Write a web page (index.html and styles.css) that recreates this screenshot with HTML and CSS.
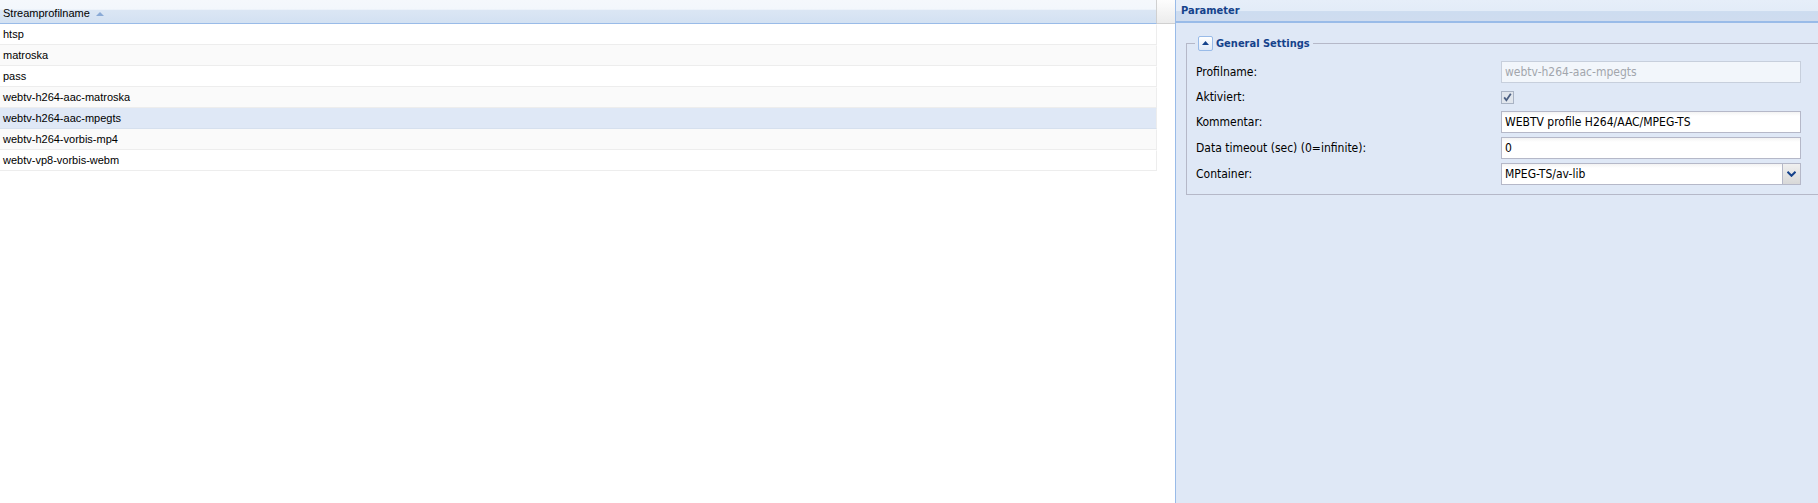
FILE: index.html
```html
<!DOCTYPE html>
<html lang="de">
<head>
  <meta charset="UTF-8">
  <title>Stream-Profile</title>
  <link rel="stylesheet" href="styles.css">
</head>
<body>

  <div class="layout">
    <div class="grid">
      <div class="grid-head">
        <div class="hd-col sorted">Streamprofilname <span class="sort-arrow"></span></div>
        <div class="hd-filler"></div>
      </div>
      <div class="grid-body">
        <div class="row">htsp</div>
        <div class="row alt">matroska</div>
        <div class="row">pass</div>
        <div class="row alt">webtv-h264-aac-matroska</div>
        <div class="row selected">webtv-h264-aac-mpegts</div>
        <div class="row alt">webtv-h264-vorbis-mp4</div>
        <div class="row">webtv-vp8-vorbis-webm</div>
      </div>
    </div>

    <div class="panel">
      <div class="panel-head">Parameter</div>
      <div class="panel-body">
        <fieldset class="fset">
          <legend>
            <span class="collapse-btn">
              <svg width="7" height="4" viewBox="0 0 7 4"><path d="M0 4 L3.5 0 L7 4 Z" fill="#15428b"/></svg>
            </span>
            General Settings
          </legend>

          <div class="frow">
            <label>Profilname:</label>
            <input class="field disabled" type="text" value="webtv-h264-aac-mpegts" disabled>
          </div>
          <div class="frow check-row">
            <label>Aktiviert:</label>
            <span class="checkbox">
              <svg width="9" height="9" viewBox="0 0 9 9"><path d="M1.2 4.4 L3.4 7.2 L7.8 0.8" stroke="#4b5f82" stroke-width="1.8" fill="none"/></svg>
            </span>
          </div>
          <div class="frow">
            <label>Kommentar:</label>
            <input class="field" type="text" value="WEBTV profile H264/AAC/MPEG-TS">
          </div>
          <div class="frow">
            <label>Data timeout (sec) (0=infinite):</label>
            <input class="field" type="text" value="0">
          </div>
          <div class="frow">
            <label>Container:</label>
            <div class="combo">
              <span class="combo-text">MPEG-TS/av-lib</span>
              <span class="trigger">
                <svg width="9" height="6" viewBox="0 0 9 6"><path d="M0.5 0.8 L4.5 4.8 L8.5 0.8" stroke="#15428b" stroke-width="2" fill="none"/></svg>
              </span>
            </div>
          </div>
        </fieldset>
      </div>
    </div>
  </div>

</body>
</html>
```

FILE: styles.css
```css
body {
  margin: 0;
  width: 1818px;
  height: 503px;
  overflow: hidden;
  background: #fff;
}
.layout {
  display: flex;
  height: 503px;
}

/* grid */
.grid {
  width: 1175px;
  flex: none;
  font-family: "Liberation Sans", Arial, sans-serif;
  font-size: 11px;
  color: #000;
}
.grid-head {
  display: flex;
  height: 24px;
}
.hd-col {
  width: 1153px;
  padding: 3px 0 0 3px;
  line-height: 20px;
  border-right: 1px solid #d0d0d0;
  border-bottom: 1px solid #99bbe8;
  background: linear-gradient(#f5f8fc 0, #f3f7fc 40%, #dbe6f4 45%, #d3e1f2 100%);
}
.hd-filler {
  flex: 1;
  border-bottom: 1px solid #d0d0d0;
  background: linear-gradient(#fdfdfd, #ececec);
}
.sort-arrow {
  display: inline-block;
  width: 0;
  height: 0;
  margin-left: 3px;
  vertical-align: 1px;
  border-left: 4px solid transparent;
  border-right: 4px solid transparent;
  border-bottom: 4px solid #8aaad6;
}
.grid-body {
  width: 1157px;
}
.row {
  height: 19px;
  line-height: 19px;
  padding-left: 3px;
  border-top: 1px solid transparent;
  border-bottom: 1px solid #ededed;
  border-right: 1px solid #ededed;
  background: #fff;
}
.row.alt {
  background: #fafafa;
}
.row.selected {
  background: #dfe8f6;
  border-bottom-color: #d6e0ee;
}

/* panel */
.panel {
  flex: 1;
  border-left: 1px solid #99bbe8;
  background: #dfe8f6;
  font-family: "DejaVu Sans Condensed", "DejaVu Sans", sans-serif;
  font-stretch: condensed;
  overflow: hidden;
}
.panel-head {
  height: 20px;
  line-height: 20px;
  padding: 1px 0 0 5px;
  font-size: 11px;
  font-weight: bold;
  color: #15428b;
  border-bottom: 2px solid #99bbe8;
  background: linear-gradient(#e6eef9 0, #e3ecf8 50%, #cddcf0 55%, #cfdcef 100%);
}
.panel-body {
  padding: 12px 0 0 10px;
}
.fset {
  width: 640px;
  margin: 0;
  padding: 10px 9px 5px 9px;
  border: 1px solid #b5b8c8;
  border-right: none;
}
.fset legend {
  margin-left: -1px;
  padding: 0 3px;
  display: flex;
  align-items: center;
  gap: 3px;
  font-size: 11px;
  font-weight: bold;
  color: #15428b;
  height: 16px;
}
.collapse-btn {
  width: 13px;
  height: 13px;
  display: flex;
  align-items: center;
  justify-content: center;
  border: 1px solid #99bbe8;
  border-radius: 2px;
  background: linear-gradient(#ffffff, #dfe8f6);
}

.frow {
  display: flex;
  align-items: center;
  height: 22px;
  margin-bottom: 4px;
  font-size: 12px;
}
.frow label {
  width: 305px;
  flex: none;
}
.check-row {
  height: 20px;
}
.field {
  box-sizing: border-box;
  width: 300px;
  height: 22px;
  margin: 0;
  padding: 1px 3px;
  border: 1px solid #b5b8c8;
  background: linear-gradient(#f3f3f3 0, #ffffff 4px);
  font-family: inherit;
  font-stretch: condensed;
  font-size: 12px;
  color: #000;
  outline: none;
}
.field.disabled {
  border-color: #c7cfdc;
  background: #f2f6fb;
  color: #a2a6ad;
}
.checkbox {
  width: 11px;
  height: 11px;
  border: 1px solid #a9b3c4;
  background: #e1e6ed;
  display: flex;
  align-items: center;
  justify-content: center;
}
.combo {
  box-sizing: border-box;
  width: 300px;
  height: 22px;
  display: flex;
  border: 1px solid #b5b8c8;
  background: linear-gradient(#f3f3f3 0, #ffffff 4px);
}
.combo-text {
  flex: 1;
  padding-left: 3px;
  line-height: 20px;
}
.trigger {
  width: 17px;
  display: flex;
  align-items: center;
  justify-content: center;
  border-left: 1px solid #b5b8c8;
  background: linear-gradient(#f0f0f0, #d8d8d8);
}
```
